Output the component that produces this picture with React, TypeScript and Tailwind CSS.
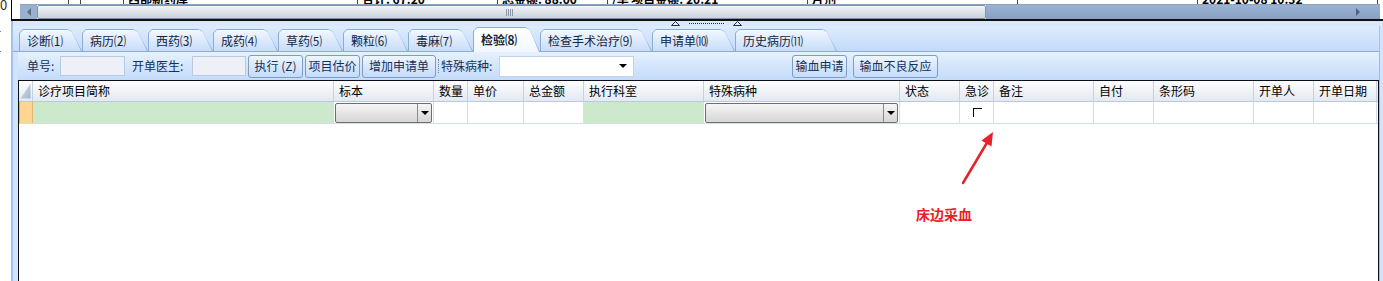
import React from "react";

const TABS = [
  { label: "诊断⑴", w: "w-[63px]" },
  { label: "病历⑵", w: "w-[66px]" },
  { label: "西药⑶", w: "w-[65px]" },
  { label: "成药⑷", w: "w-[65px]" },
  { label: "草药⑸", w: "w-[65px]" },
  { label: "颗粒⑹", w: "w-[65px]" },
  { label: "毒麻⑺", w: "w-[65px]" },
  { label: "检验⑻", w: "w-[67px]", active: true },
  { label: "检查手术治疗⑼", w: "w-[112px]" },
  { label: "申请单⑽", w: "w-[83px]" },
  { label: "历史病历⑾", w: "w-[102px]" },
];

const COLS = [
  { label: "诊疗项目简称", w: "w-[301px]", cell: "green" },
  { label: "标本", w: "w-[100px]", cell: "combo" },
  { label: "数量", w: "w-[34px]" },
  { label: "单价", w: "w-[56px]" },
  { label: "总金额", w: "w-[60px]" },
  { label: "执行科室", w: "w-[120px]", cell: "green" },
  { label: "特殊病种", w: "w-[196px]", cell: "combo" },
  { label: "状态", w: "w-[60px]" },
  { label: "急诊", w: "w-[34px]", cell: "check" },
  { label: "备注", w: "w-[100px]" },
  { label: "自付", w: "w-[60px]" },
  { label: "条形码", w: "w-[100px]" },
  { label: "开单人", w: "w-[60px]" },
  { label: "开单日期", w: "w-[63px]" },
];

const TOP_CELLS = [
  { w: "w-[49px]", t: "" },
  { w: "w-[12px]", t: "" },
  { w: "w-[43px]", t: "" },
  { w: "w-[234px]", t: "西部新药库" },
  { w: "w-[140px]", t: "合计: 67.20" },
  { w: "w-[110px]", t: "总金额: 88.00" },
  { w: "w-[200px]", t: "/单  项目金额: 20.21" },
  { w: "w-[210px]", t: "片剂" },
  { w: "w-[180px]", t: "" },
  { w: "w-[180px]", t: "2021-10-08 10:32" },
];

const outerClip =
  "[clip-path:polygon(0_100%,0_4px,4px_0,calc(100%_-_15px)_0,calc(100%_-_11px)_2px,100%_100%)]";
const innerClip =
  "[clip-path:polygon(0_100%,0_3px,3px_0,calc(100%_-_14px)_0,calc(100%_-_10px)_2px,calc(100%_-_1px)_100%)]";

function Tab({ label, w, active }: { label: string; w: string; active?: boolean }) {
  return (
    <div
      className={`${w} ${outerClip} bg-[#8cacd6] pt-px pl-px shrink-0 ${
        active ? "relative z-10 h-[25px] -mb-px" : "h-[22px]"
      }`}
    >
      <div
        className={`${innerClip} h-full flex items-center pl-[7px] text-[12px] text-[#15243a] whitespace-nowrap ${
          active
            ? "bg-linear-to-b from-white to-[#f2f7fe] font-bold"
            : "bg-linear-to-b from-[#f1f7ff] to-[#c8ddf9]"
        }`}
      >
        {label}
      </div>
    </div>
  );
}

function Button({ w, children }: { w: string; children: React.ReactNode }) {
  return (
    <div
      className={`${w} h-[23px] shrink-0 rounded-[3px] border border-[#7d9cc8] bg-linear-to-b from-[#eef5ff] to-[#c4dbf8] flex items-center justify-center text-[12px] text-[#14305c] whitespace-nowrap`}
    >
      {children}
    </div>
  );
}

function Combo() {
  return (
    <div className="h-[20px] w-full mx-px flex border border-[#6f6f6f] bg-linear-to-b from-[#f6f6f6] to-[#d6d6d6] rounded-[2px]">
      <div className="flex-1" />
      <div className="w-[14px] border-l border-[#8a8a8a] flex items-center justify-center">
        <div className="w-0 h-0 border-l-[4px] border-r-[4px] border-t-[4px] border-l-transparent border-r-transparent border-t-black" />
      </div>
    </div>
  );
}

function UpTriangle() {
  return (
    <svg width="9" height="5" viewBox="0 0 9 5" className="block">
      <path d="M0.5 4.5 L4.5 0.5 L8.5 4.5 Z" fill="#e4effd" stroke="#1f2f48" strokeWidth="1" />
    </svg>
  );
}

export default function App() {
  return (
    <div className="relative w-[1383px] h-[281px] overflow-hidden bg-white font-['Noto_Sans_CJK_SC',sans-serif] text-black">
      {/* upper grid remnant + scrollbar */}
      <div className="flex h-[21px]">
        <div className="w-[11px] shrink-0 text-[13px] leading-none -mt-[2px] text-[#3a2a10]">0</div>
        <div className="flex-1 border-l border-black flex flex-col border-b-2 border-b-[#111]">
          <div className="h-[4px] overflow-hidden flex pl-[8px]">
            {TOP_CELLS.map((c, i) => (
              <div
                key={i}
                className={`${c.w} shrink-0 border-r border-[#444] -mt-[10px] h-[14px] pl-[4px] text-[12px] font-bold whitespace-nowrap`}
              >
                {c.t}
              </div>
            ))}
          </div>
          <div className="flex-1 flex ml-[8px] mr-[3px] border-t border-[#8aa2c2]">
            <div className="w-[17px] bg-[#9ab0cf] flex items-center justify-center">
              <div className="w-0 h-0 border-t-[4px] border-b-[4px] border-r-[4px] border-t-transparent border-b-transparent border-r-[#5d6f88]" />
            </div>
            <div className="w-[949px] border border-[#8194ae] rounded-[2px] bg-linear-to-b from-[#f2f4f7] to-[#c9d2dc] flex items-center justify-center">
              <div className="flex gap-px -ml-[4px]">
                <div className="w-px h-[7px] bg-[#8d98a8]" />
                <div className="w-px h-[7px] bg-[#8d98a8]" />
                <div className="w-px h-[7px] bg-[#8d98a8]" />
                <div className="w-px h-[7px] bg-[#8d98a8]" />
              </div>
            </div>
            <div className="flex-1 bg-linear-to-b from-[#9cb3d3] to-[#869fc3] flex items-center justify-end pr-[20px]">
              <div className="w-0 h-0 border-t-[4px] border-b-[4px] border-l-[4px] border-t-transparent border-b-transparent border-l-[#4f627d]" />
            </div>
          </div>
        </div>
      </div>

      {/* lower panel */}
      <div className="flex h-[260px]">
        <div className="w-[11px] shrink-0 relative">
          <div className="absolute left-0 top-[10px] w-px h-px bg-[#5b8fd6]" />
          <div className="absolute left-0 top-[30px] w-px h-px bg-[#5b8fd6]" />
        </div>
        <div className="flex-1 flex flex-col border-l-2 border-[#a4c1e9] bg-[#d2e4fc]">
          {/* splitter */}
          <div className="h-[5px] bg-[#d9e8fc] flex items-start justify-center gap-[9px] pl-[16px]">
            <UpTriangle />
            <div className="mt-[2px] flex gap-px">
              {Array.from({ length: 18 }).map((_, i) => (
                <div key={i} className="w-px h-px bg-[#1b2b44]" />
              ))}
            </div>
            <UpTriangle />
          </div>

          {/* tab strip */}
          <div className="h-[26px] flex items-end pl-[6px] mr-[3px] border-b border-[#8cacd6] bg-linear-to-b from-[#deecfe] to-[#c2dafa] border-r border-r-[#a8c3e8]">
            {TABS.map((t) => (
              <Tab key={t.label} label={t.label} w={t.w} active={t.active} />
            ))}
          </div>

          {/* content */}
          <div className="flex-1 flex flex-col ml-[5px] mr-[3px] border-r border-[#9ebbe3]">
            {/* toolbar */}
            <div className="h-[28px] flex items-center pl-[9px] bg-linear-to-b from-[#e6f1fe] to-[#c3dbfa] text-[12px] text-[#14305c]">
              <span className="w-[33px] shrink-0">单号:</span>
              <div className="w-[65px] h-[20px] shrink-0 bg-[#edf1f7] border border-[#b9c9de]" />
              <span className="ml-[7px] w-[60px] shrink-0">开单医生:</span>
              <div className="w-[54px] h-[20px] shrink-0 bg-[#edf1f7] border border-[#b9c9de]" />
              <div className="ml-[2px]">
                <Button w="w-[55px]">执行 (Z)</Button>
              </div>
              <div className="ml-[2px]">
                <Button w="w-[55px]">项目估价</Button>
              </div>
              <div className="ml-[2px]">
                <Button w="w-[74px]">增加申请单</Button>
              </div>
              <div className="ml-[2px] w-px h-[14px] border-l border-dotted border-[#6a7f9c]" />
              <span className="ml-[2px] w-[58px] shrink-0 whitespace-nowrap">特殊病种:</span>
              <div className="w-[135px] h-[21px] shrink-0 bg-white border border-[#c4d3e6] flex items-center justify-end pr-[6px]">
                <div className="w-0 h-0 border-l-[4px] border-r-[4px] border-t-[4px] border-l-transparent border-r-transparent border-t-black" />
              </div>
              <div className="ml-[158px]">
                <Button w="w-[55px]">输血申请</Button>
              </div>
              <div className="ml-[6px]">
                <Button w="w-[85px]">输血不良反应</Button>
              </div>
            </div>

            {/* grid */}
            <div className="flex-1 bg-white border-l border-t border-r border-[#0b0f18] flex flex-col">
              <div className="h-[21px] flex bg-linear-to-b from-[#fdfdfe] to-[#e3e9f2] border-b border-[#b9c9de]">
                <div className="w-[14px] shrink-0 border-r border-[#c3d1e4] flex items-center justify-center">
                  <div className="w-[10px] h-[15px] bg-linear-to-br from-[#dbe4ef] to-[#9fb1c8] [clip-path:polygon(100%_0,100%_100%,0_100%)]" />
                </div>
                {COLS.map((c) => (
                  <div
                    key={c.label}
                    className={`${c.w} shrink-0 border-r border-[#c3d1e4] pl-[5px] flex items-center text-[12px] whitespace-nowrap`}
                  >
                    {c.label}
                  </div>
                ))}
              </div>
              <div className="h-[22px] flex border-b border-[#d3deec]">
                <div className="w-[14px] shrink-0 bg-[#fed592] border-l border-[#f0a34a] border-r border-r-[#e7b56a]" />
                {COLS.map((c) => (
                  <div
                    key={c.label}
                    className={`${c.w} shrink-0 border-r border-[#d3deec] flex items-center justify-center ${
                      c.cell === "green" ? "bg-[#cde9cc]" : ""
                    }`}
                  >
                    {c.cell === "combo" && <Combo />}
                    {c.cell === "check" && (
                      <div className="w-[9px] h-[9px] border-t border-l border-black -mr-[2px]" />
                    )}
                  </div>
                ))}
              </div>
            </div>
          </div>
        </div>
      </div>

      {/* annotation */}
      <svg className="absolute left-0 top-0 pointer-events-none" width="1383" height="281">
        <line x1="963" y1="183" x2="988" y2="141" stroke="#e8202a" strokeWidth="2.5" strokeLinecap="round" />
        <polygon points="993,132 991.5,146.5 981.5,140.5" fill="#e8202a" />
      </svg>
      <div className="absolute left-[916px] top-[207px] text-[14px] font-bold text-[#e8202a] leading-none">
        床边采血
      </div>
    </div>
  );
}
